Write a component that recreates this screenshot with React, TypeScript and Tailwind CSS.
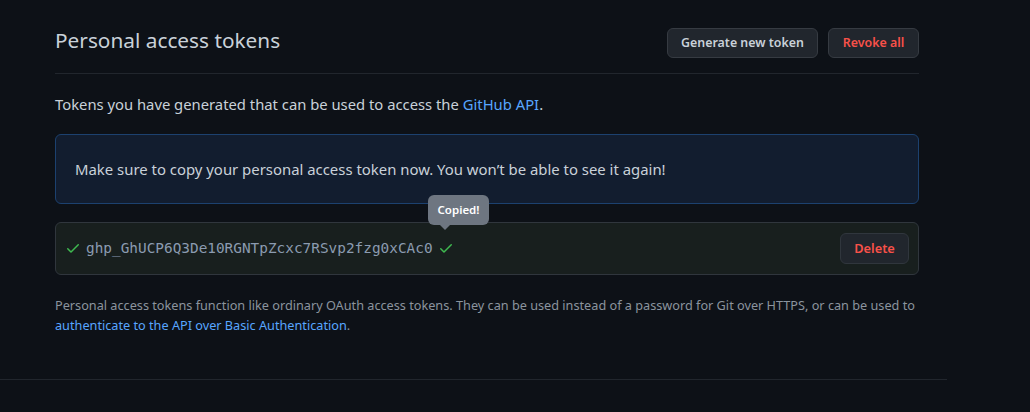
import React from "react";

function Check({ className }: { className?: string }) {
  return (
    <svg viewBox="0 0 16 16" width="16" height="16" className={className} fill="currentColor">
      <path d="M13.78 4.22a.75.75 0 0 1 0 1.06l-7.25 7.25a.75.75 0 0 1-1.06 0L2.22 9.28a.751.751 0 0 1 .018-1.042.751.751 0 0 1 1.042-.018L6 10.94l6.72-6.72a.75.75 0 0 1 1.06 0Z" />
    </svg>
  );
}

export default function App() {
  const font = { fontFamily: '"Noto Sans", "Open Sans", sans-serif' };
  return (
    <div className="w-[1030px] h-[412px] bg-[#0d1117] overflow-hidden" style={font}>
      <div className="w-[947px]">
        <div className="pl-[55px] pr-[28px]">
          <div className="flex items-start justify-between pt-[28px] pb-[15px] border-b border-[#21262d]">
            <h2 className="text-[20.8px] leading-[24px] text-[#c9d1d9] font-normal">Personal access tokens</h2>
            <div className="flex gap-[10px]">
              <button className="h-[30px] w-[151px] rounded-[6px] bg-[#21262d] border border-[#363b42] text-[12.4px] font-semibold text-[#c9d1d9]">
                Generate new token
              </button>
              <button className="h-[30px] w-[91px] rounded-[6px] bg-[#21262d] border border-[#363b42] text-[12.4px] font-semibold text-[#f85149]">
                Revoke all
              </button>
            </div>
          </div>
          <p className="mt-[20px] text-[14.8px] leading-[21px] text-[#c9d1d9]">
            Tokens you have generated that can be used to access the{" "}
            <span className="text-[#58a6ff]">GitHub API</span>.
          </p>
          <div className="mt-[19px] h-[70px] flex items-center px-[19px] rounded-[6px] bg-[#121d2f] border border-[#1c416f] text-[14.9px] text-[#c9d1d9]">
            Make sure to copy your personal access token now. You won’t be able to see it again!
          </div>
          <div className="relative mt-[18px] h-[53px] flex items-center justify-between pl-[9px] pr-[9px] rounded-[6px] bg-[#181f1e] border border-[#30363d]">
            <div className="flex items-center gap-[5px]">
              <Check className="text-[#3fb950]" />
              <span className="text-[14.4px] text-[#8b9bb0]" style={{ fontFamily: '"DejaVu Sans Mono", monospace' }}>
                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
              </span>
              <Check className="text-[#3fb950]" />
            </div>
            <button className="h-[31px] w-[69px] rounded-[6px] bg-[#21262d] border border-[#30363d] text-[12.8px] font-semibold text-[#f85149]">
              Delete
            </button>
            <div className="absolute left-[372px] top-[-28px] h-[30px] w-[61px] justify-center flex items-center rounded-[6px] bg-[#6e7681] text-white text-[11.5px] font-semibold">
              Copied!
              <div className="absolute left-[12px] bottom-[-5px] w-0 h-0 border-l-[5px] border-r-[5px] border-t-[5px] border-l-transparent border-r-transparent border-t-[#6e7681]" />
            </div>
          </div>
          <p className="mt-[20px] text-[12.7px] leading-[20px] text-[#8b949e]">
            Personal access tokens function like ordinary OAuth access tokens. They can be used instead of a password for Git over HTTPS, or can be used to{" "}
            <span className="text-[#58a6ff]">authenticate to the API over Basic Authentication</span>.
          </p>
        </div>
        <div className="mt-[44px] border-t border-[#21262d]" />
      </div>
    </div>
  );
}
